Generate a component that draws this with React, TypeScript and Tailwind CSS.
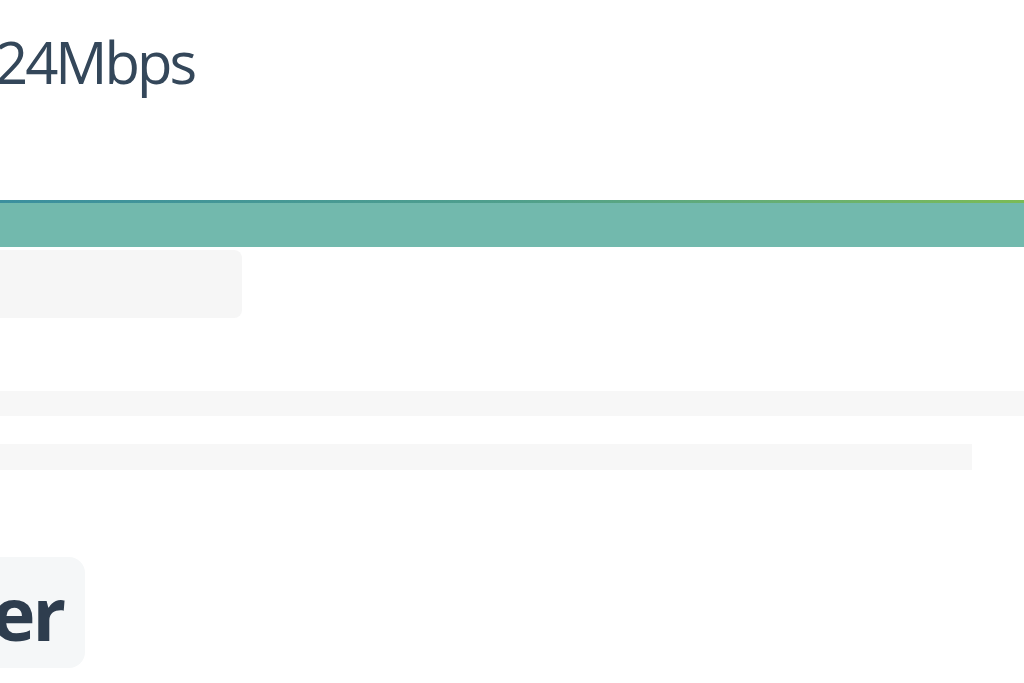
import React from 'react';

export default function App() {
  return (
    <div className="w-[1024px] h-[683px] overflow-hidden bg-white flex flex-col font-['Open_Sans',sans-serif]">
      {/* Speed readout */}
      <div className="mt-[33px] -ml-[5px] text-[58px] leading-none text-[#34475a] tracking-[-3px]">
        24Mbps
      </div>

      {/* Progress bar */}
      <div className="mt-[109px] h-[47px] w-full bg-[#72b9ad] flex flex-col">
        <div className="h-[3px] w-full bg-gradient-to-r from-[#3b8f9e] via-[#4f9f8c] to-[#7bbb55]"></div>
      </div>

      {/* Placeholder rows */}
      <div className="mt-[3px] h-[68px] w-[242px] rounded-r-lg bg-[#f6f6f6]"></div>
      <div className="mt-[73px] h-[25px] w-full bg-[#f7f7f7]"></div>
      <div className="mt-[28px] h-[26px] w-[972px] bg-[#f7f7f7]"></div>

      {/* Action button */}
      <div className="mt-[87px] w-[85px] flex justify-end">
        <div className="shrink-0 h-[111px] rounded-2xl bg-[#f5f7f8] pl-[24px] pr-[22px] flex items-center text-[74px] font-bold text-[#2e3d4e] leading-none tracking-[-3px]">
          Better
        </div>
      </div>
    </div>
  );
}
